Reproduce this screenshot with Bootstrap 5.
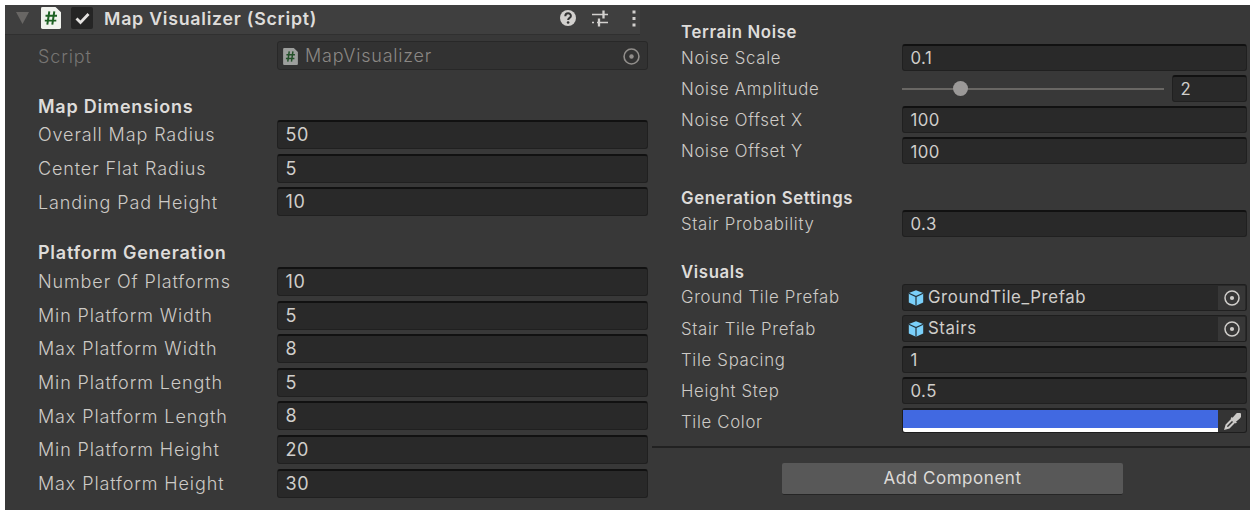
<!DOCTYPE html>
<html lang="en">
<head>
<meta charset="utf-8">
<title>Map Visualizer</title>
<link href="https://cdn.jsdelivr.net/npm/bootstrap@5.3.0/dist/css/bootstrap.min.css" rel="stylesheet">
<style>
body{background:#fff;font-family:Inter,"Liberation Sans",sans-serif;color:#c8c6c3;overflow:hidden}
.inspector{margin:5px;width:1245px;height:505px;background:#383838}
.pane-a{width:647px;font-size:18px;letter-spacing:.6px;--row:33.6px;--field:29px;--label:271px}
.pane-b{width:598px;font-size:16.8px;letter-spacing:.45px;--row:31.15px;--field:27px;--label:221px}
.head-bar{height:30px;background:#3f3f3f;border-bottom:1px solid #303030;padding-left:11px;padding-right:10px;margin-right:12px}
.head-title{font-weight:600;color:#dedcda;font-size:17.8px;letter-spacing:.74px;line-height:20px}
.check{width:22px;height:22px;background:#252525;border-radius:2px}
.prop{height:var(--row);padding-right:4px}
.pane-a .prop,.pane-a .group-title{padding-left:33px}
.pane-b .prop,.pane-b .group-title{padding-left:29px}
.pane-b .prop{padding-right:3px}
.prop-label{width:239px;font-weight:300;line-height:1;padding-top:1.600px;letter-spacing:.88px;color:#cdcac6}
.pane-b .prop-label{width:221px;letter-spacing:.68px}
.group-title{font-weight:600;color:#dedcda;line-height:23px;display:flex;align-items:flex-end;letter-spacing:.76px}
.pane-b .group-title{line-height:20px;letter-spacing:.62px}
.field{height:var(--field);background:#292929;border:1px solid #202020;border-top:2px solid #111;border-radius:3px;padding-left:7.500px;line-height:1;color:#d0cecb;min-width:0}
.pane-b .field{padding-top:1px}
.object-field,.pane-b .object-field{border-top:1px solid #1e1e1e;padding-left:5px;padding-top:1px}
.field.locked{background:#323232;border-color:#282828;color:#8b8885;font-weight:300;letter-spacing:.78px}
.picker{width:27px;height:24px;background:#373737;margin-right:1px}
.track{height:2px;background:#696764}
.knob{width:15px;height:15px;background:#9b9998;left:51px;top:-7px}
.swatch{height:25px;border:1px solid #1d1d1d;border-top-width:2px;border-radius:3px;background:#343434}
.swatch-fill{background:#4169e1;border-bottom:4px solid #fff;border-radius:0 0 0 2px}
.rule{height:2px;background:#212121;margin-top:9px}
.add-btn{width:341px;height:32px;margin-top:14.5px;margin-left:130px;background:#585858;border:0;border-bottom:1px solid #252525;border-radius:2px;color:#dddbd8;font-size:17px;letter-spacing:.55px;padding:0;line-height:1}
svg{display:block;flex:none}
</style>
</head>
<body>
<svg width="0" height="0" class="position-absolute">
<symbol id="target" viewBox="0 0 16 16"><circle cx="8" cy="8" r="7" fill="none" stroke="currentColor" stroke-width="1.5"/><circle cx="8" cy="8" r="2.100" fill="currentColor"/></symbol>
<symbol id="cube" viewBox="0 0 16 16"><path d="M8 .3 15.2 3v9.5L8 15.8.8 12.500V3z" fill="#7bd0fa"/><path d="M.8 3.200 8 6.500l7.200-3.300M8 6.500v9.300" fill="none" stroke="#23333d" stroke-width="1.2"/></symbol>
<symbol id="script" viewBox="0 0 20 23"><path d="M1.500 0H14.500L20 5.500V21.500Q20 23 18.500 23H1.500Q0 23 0 21.500V1.500Q0 0 1.500 0z" fill="var(--paper)"/><path d="M8.300 4.500 6.300 18.500M13.300 4.500l-2 14M4.500 9.200h11.500M3.800 14.200h11.500" stroke="var(--ink)" stroke-width="2" fill="none"/></symbol>
</svg>
<main class="inspector d-flex">
<section class="pane-a">
  <header class="head-bar d-flex align-items-start">
    <svg width="13" height="12" viewBox="0 0 13 12" style="margin-top:7px"><path d="M0 0h13L6.500 12z" fill="#686664"/></svg>
    <svg style="--paper:#f1f3ee;--ink:#1d6123;margin-left:12px;margin-top:2px" width="20" height="22" viewBox="0 0 20 23" preserveAspectRatio="none"><use href="#script" width="20" height="23"/></svg>
    <span class="check d-flex align-items-center justify-content-center" style="margin-left:10px;margin-top:2px"><svg width="15" height="13" viewBox="0 0 15 13"><path d="M1.500 6.500 5.500 10.500 13.500 2" fill="none" stroke="#e5e3e1" stroke-width="2.800"/></svg></span>
    <span class="head-title" style="margin-left:11px;margin-top:4px">Map Visualizer (Script)</span>
    <span class="ms-auto d-flex align-items-center" style="margin-top:4.500px;margin-right:-12px">
      <svg width="16" height="16" viewBox="0 0 16 16"><circle cx="8" cy="8" r="8" fill="#d2d0ce"/><path d="M5.300 6.200C5.300 2.300 10.900 2.400 10.900 5.900 10.900 7.900 8.100 7.800 8.100 10" fill="none" stroke="#343434" stroke-width="2"/><circle cx="8.100" cy="12.500" r="1.300" fill="#343434"/></svg>
      <svg width="17" height="17" viewBox="0 0 17 17" style="margin-left:16px"><path d="M0 4.500h16M0 12.500h2M5 12.500h11" fill="none" stroke="#d2d0ce" stroke-width="1.500"/><path d="M11.500 .5v8M7 8.500v8" fill="none" stroke="#d2d0ce" stroke-width="2.300"/></svg>
      <svg width="4" height="17" viewBox="0 0 4 17" style="margin-left:23px;margin-right:6px"><path d="M.5.500h3v3h-3zM.5 7h3v3h-3zM.5 13.500h3v3h-3z" fill="#d2d0ce"/></svg>
    </span>
  </header>
  <div style="height:4px"></div>
  <div class="prop d-flex align-items-center"><span class="prop-label" style="color:#777573">Script</span><div class="field object-field locked flex-fill d-flex align-items-center"><svg style="--paper:#9d9f9d;--ink:#235029" width="15" height="17"><use href="#script"/></svg><span style="margin-left:7px">MapVisualizer</span><svg width="17" height="17" class="ms-auto" style="margin-right:7px;color:#918e8b"><use href="#target"/></svg></div></div>
  <div class="group-title" style="height:45.300px">Map Dimensions</div>
  <div class="prop d-flex align-items-center"><span class="prop-label">Overall Map Radius</span><div class="field flex-fill d-flex align-items-center">50</div></div>
  <div class="prop d-flex align-items-center"><span class="prop-label">Center Flat Radius</span><div class="field flex-fill d-flex align-items-center">5</div></div>
  <div class="prop d-flex align-items-center"><span class="prop-label">Landing Pad Height</span><div class="field flex-fill d-flex align-items-center">10</div></div>
  <div class="group-title" style="height:46px;padding-bottom:.6px">Platform Generation</div>
  <div class="prop d-flex align-items-center"><span class="prop-label">Number Of Platforms</span><div class="field flex-fill d-flex align-items-center">10</div></div>
  <div class="prop d-flex align-items-center"><span class="prop-label">Min Platform Width</span><div class="field flex-fill d-flex align-items-center">5</div></div>
  <div class="prop d-flex align-items-center"><span class="prop-label">Max Platform Width</span><div class="field flex-fill d-flex align-items-center">8</div></div>
  <div class="prop d-flex align-items-center"><span class="prop-label">Min Platform Length</span><div class="field flex-fill d-flex align-items-center">5</div></div>
  <div class="prop d-flex align-items-center"><span class="prop-label">Max Platform Length</span><div class="field flex-fill d-flex align-items-center">8</div></div>
  <div class="prop d-flex align-items-center"><span class="prop-label">Min Platform Height</span><div class="field flex-fill d-flex align-items-center">20</div></div>
  <div class="prop d-flex align-items-center"><span class="prop-label">Max Platform Height</span><div class="field flex-fill d-flex align-items-center">30</div></div>
</section>
<section class="pane-b">
  <div class="group-title" style="height:37px">Terrain Noise</div>
  <div class="prop d-flex align-items-center"><span class="prop-label">Noise Scale</span><div class="field flex-fill d-flex align-items-center">0.1</div></div>
  <div class="prop d-flex align-items-center"><span class="prop-label">Noise Amplitude</span><div class="track flex-fill position-relative"><span class="knob rounded-circle position-absolute"></span></div><div class="field d-flex align-items-center" style="width:75px;margin-left:8px">2</div></div>
  <div class="prop d-flex align-items-center"><span class="prop-label">Noise Offset X</span><div class="field flex-fill d-flex align-items-center">100</div></div>
  <div class="prop d-flex align-items-center"><span class="prop-label">Noise Offset Y</span><div class="field flex-fill d-flex align-items-center">100</div></div>
  <div class="group-title" style="height:41.500px">Generation Settings</div>
  <div class="prop d-flex align-items-center"><span class="prop-label">Stair Probability</span><div class="field flex-fill d-flex align-items-center">0.3</div></div>
  <div class="group-title" style="height:42.300px">Visuals</div>
  <div class="prop d-flex align-items-center"><span class="prop-label">Ground Tile Prefab</span><div class="field object-field flex-fill d-flex align-items-center"><svg width="16" height="16"><use href="#cube"/></svg><span style="margin-left:4px;letter-spacing:.6px">GroundTile_Prefab</span><span class="picker ms-auto d-flex align-items-center justify-content-center"><svg width="16" height="16"><use href="#target"/></svg></span></div></div>
  <div class="prop d-flex align-items-center"><span class="prop-label">Stair Tile Prefab</span><div class="field object-field flex-fill d-flex align-items-center"><svg width="16" height="16"><use href="#cube"/></svg><span style="margin-left:4px;letter-spacing:.6px">Stairs</span><span class="picker ms-auto d-flex align-items-center justify-content-center"><svg width="16" height="16"><use href="#target"/></svg></span></div></div>
  <div class="prop d-flex align-items-center"><span class="prop-label">Tile Spacing</span><div class="field flex-fill d-flex align-items-center">1</div></div>
  <div class="prop d-flex align-items-center"><span class="prop-label">Height Step</span><div class="field flex-fill d-flex align-items-center">0.5</div></div>
  <div class="prop d-flex align-items-center"><span class="prop-label">Tile Color</span><div class="swatch flex-fill d-flex" style="margin-bottom:2px"><div class="swatch-fill flex-fill"></div><span class="d-flex align-items-center justify-content-center" style="width:28px"><svg width="17" height="17" viewBox="0 0 17 17"><path d="M1.500 15.500 2.500 12 8 6.500l2.500 2.500L5 14.500z" fill="none" stroke="#cccac8" stroke-width="2"/><path d="M7.200 4.700 12.300 9.800M9 5.500 12.500 1.500Q14.500-.5 16 1 17.500 2.500 15.500 4.500L11.500 8z" fill="#cccac8" stroke="#cccac8" stroke-width="1.800"/></svg></span></div></div>
  <div class="rule"></div>
  <button class="btn add-btn d-block" type="button">Add Component</button>
</section>
</main>
<script src="https://cdn.jsdelivr.net/npm/bootstrap@5.3.0/dist/js/bootstrap.bundle.min.js"></script>
</body>
</html>
